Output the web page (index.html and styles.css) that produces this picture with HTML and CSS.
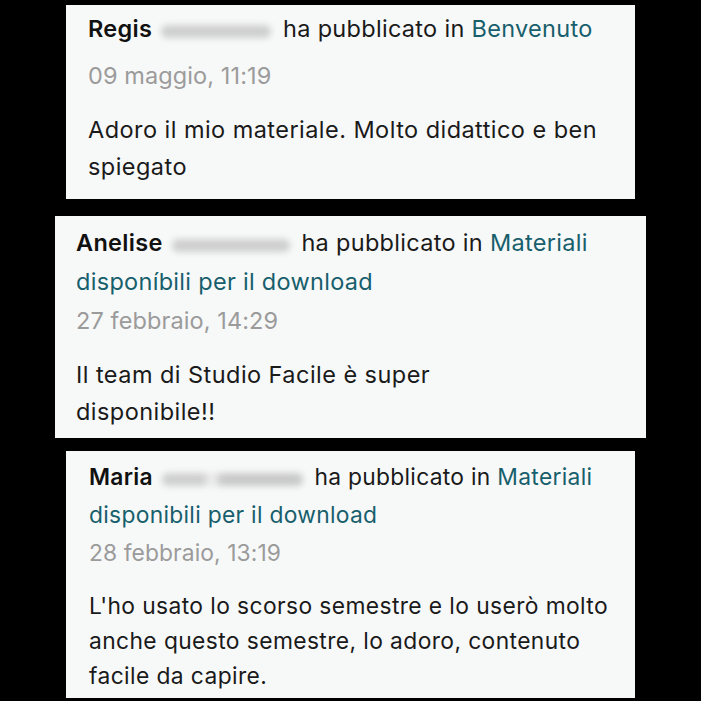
FILE: index.html
```html
<!DOCTYPE html>
<html>

<head>
    <title>Commenti</title>
    <link rel="stylesheet" href="styles.css">
</head>

<body>

    <div class="post post-one">
        <div class="head">
            <b class="name">Regis</b>
            <span class="hidden hidden-one"></span>
            <span>ha pubblicato in</span> <a class="topic" href="#">Benvenuto</a>
        </div>
        <div class="date">09 maggio, 11:19</div>
        <p class="text">Adoro il mio materiale. Molto didattico e ben spiegato</p>
    </div>

    <div class="post post-two">
        <div class="head">
            <b class="name">Anelise</b>
            <span class="hidden hidden-two"></span>
            <span>ha pubblicato in</span>
            <a class="topic" href="#"><span>Materiali</span> <span>disponíbili per il download</span></a>
        </div>
        <div class="date">27 febbraio, 14:29</div>
        <p class="text">Il team di Studio Facile è super disponibile!!</p>
    </div>

    <div class="post post-three">
        <div class="head">
            <b class="name">Maria</b>
            <span class="hidden hidden-three"></span>
            <span>ha pubblicato in</span>
            <a class="topic" href="#"><span>Materiali</span> <span>disponibili per il download</span></a>
        </div>
        <div class="date">28 febbraio, 13:19</div>
        <p class="text">L'ho usato lo scorso semestre e lo userò molto anche questo semestre, lo adoro, contenuto facile da capire.</p>
    </div>

</body>

</html>
```

FILE: styles.css
```css
body {
    margin: 0;
    background-color: #000;
    font-family: Inter, "Noto Sans", sans-serif;
    color: #1a1a1a;
    font-size: 23.5px;
    letter-spacing: 0.45px;
    height: 701px;
    overflow: hidden;
}

.post {
    background-color: #f7f8f8;
    box-sizing: border-box;
}

.head {
    line-height: 39px;
    letter-spacing: 0.3px;
}

.name {
    font-weight: 600;
    color: #111;
}

/* blurred surname */
.hidden {
    display: inline-block;
    height: 13px;
    vertical-align: -1px;
    margin: 0 5px 0 2px;
    border-radius: 6px;
    background-color: #cfcfcf;
    filter: blur(3px);
}

.hidden-one {
    width: 110px;
}

.hidden-two {
    width: 118px;
}

.hidden-three {
    width: 141px;
    background: linear-gradient(to right, #cfcfcf 0, #cfcfcf 40px, #ececec 48px, #ececec 52px, #c9c9c9 60px, #c9c9c9 100%);
}

.topic {
    color: #175f6c;
    text-decoration: none;
}

.date {
    color: #9b9b9b;
    line-height: 39px;
    letter-spacing: 0.1px;
}

.text {
    margin: 16px 0 0 0;
    line-height: 37px;
}

.post-one {
    margin: 5px 0 0 66px;
    width: 569px;
    height: 194px;
    padding: 4px 26px 0 22px;
}

.post-one .date {
    margin-top: 8px;
}

.post-two {
    margin: 17px 0 0 55px;
    width: 591px;
    height: 222px;
    padding: 7px 48px 0 21px;
}

.post-two .text {
    max-width: 490px;
}

.post-three {
    margin: 13px 0 0 66px;
    width: 569px;
    height: 247px;
    padding: 7px 18px 0 23px;
    font-size: 22.8px;
    letter-spacing: 0.4px;
}

.post-three .head,
.post-three .date {
    line-height: 38px;
}

.post-three .text {
    margin-top: 16px;
    line-height: 35px;
}
```
